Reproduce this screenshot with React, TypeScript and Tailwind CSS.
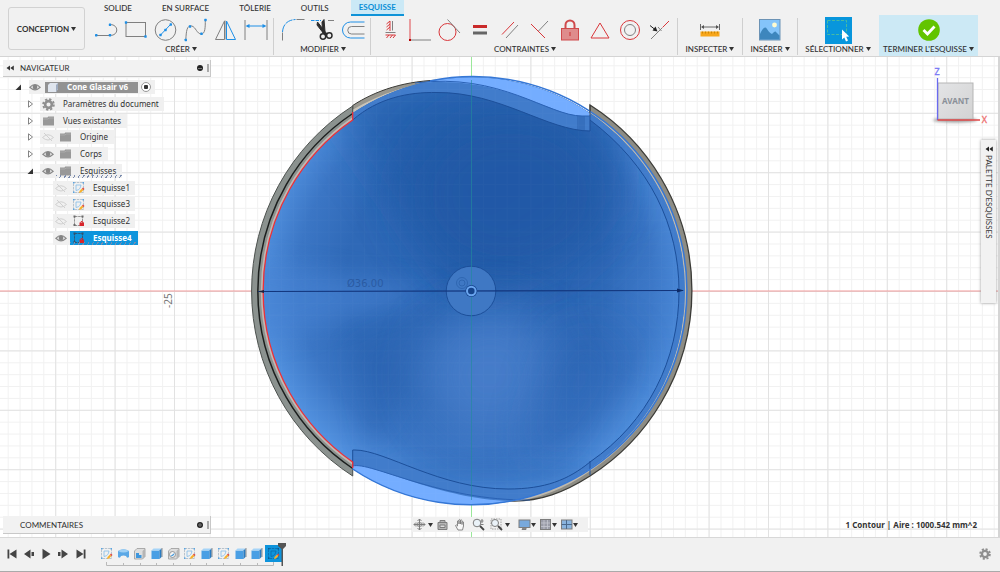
import React from "react";

type IconFn = () => React.ReactElement;

const BLUE = "#1e8fe6";
const RED = "#d9363a";
const GREY = "#808080";

function Caret() {
  return (
    <svg viewBox="0 0 5 4" className="h-1 w-[5px] shrink-0" aria-hidden="true">
      <path d="M0 0h5L2.5 4z" fill="#333" />
    </svg>
  );
}

function Icon24({ children }: { children: React.ReactNode }) {
  return (
    <svg viewBox="0 0 24 24" className="size-6" fill="none" strokeWidth="1" aria-hidden="true">
      {children}
    </svg>
  );
}

function Dot({ x, y }: { x: number; y: number }) {
  return <rect x={x - 1.2} y={y - 1.2} width="2.4" height="2.4" rx="0.4" fill={BLUE} />;
}

const LineIcon: IconFn = () => (
  <Icon24>
    <path d="M2 17.5h13M16 6.5c9 0 9 11 0 11" stroke={GREY} />
    <Dot x={2.2} y={17.3} />
    <Dot x={16} y={17.3} />
    <Dot x={16} y={6.8} />
  </Icon24>
);
const RectIcon: IconFn = () => (
  <Icon24>
    <rect x="2" y="4.5" width="19.5" height="14" stroke={GREY} />
    <Dot x={2} y={4.5} />
    <Dot x={21.5} y={18.5} />
  </Icon24>
);
const CircleIcon: IconFn = () => (
  <Icon24>
    <circle cx="11.5" cy="12" r="10.3" stroke={GREY} />
    <path d="M6.5 17l10-10.500" stroke={BLUE} />
    <Dot x={6.5} y={17} />
    <Dot x={11.5} y={12} />
    <Dot x={16.8} y={6.5} />
  </Icon24>
);
const SplineIcon: IconFn = () => (
  <Icon24>
    <path d="M1.800 22c.5-9 1-15 6-14 4 1 5 8 9.500 8 4 0 4-7 4-14" stroke={GREY} />
    <Dot x={1.8} y={22} />
    <Dot x={6} y={8.5} />
    <Dot x={17.5} y={15.7} />
    <Dot x={21.5} y={2} />
  </Icon24>
);
const MirrorIcon: IconFn = () => (
  <Icon24>
    <path d="M11 2.500v19M10.500 3L1.500 21.500h9z" stroke={GREY} />
    <path d="M12.500 3l9 18.500h-9z" stroke={BLUE} />
  </Icon24>
);
const DimensionIcon: IconFn = () => (
  <Icon24>
    <path d="M1 2v20M23 2v20" stroke={GREY} />
    <path d="M3 8h18" stroke={BLUE} />
    <path d="M1.500 8l4-2v4zM22.500 8l-4-2v4z" fill={BLUE} />
  </Icon24>
);
const FilletIcon: IconFn = () => (
  <Icon24>
    <path d="M1.500 22.500v-8M15.500 1.500h8" stroke={GREY} />
    <path d="M1.500 14C2 7 6 2 14.500 1.500" stroke={BLUE} strokeDasharray="8 1" />
  </Icon24>
);
const TrimIcon: IconFn = () => (
  <Icon24>
    <path d="M0 2.500h10" stroke={BLUE} strokeDasharray="3.500 1" />
    <path d="M17 2.500h6" stroke={GREY} />
    <path d="M6.500 4l9.500 12-2.200 1L6 7zM13 1.500l1 12-2.400 1L11 4z" fill="#2c2c2c" stroke="#2c2c2c" />
    <circle cx="12" cy="18.500" r="2.700" stroke="#2c2c2c" strokeWidth="1.500" />
    <circle cx="18.300" cy="17.500" r="2.700" stroke="#2c2c2c" strokeWidth="1.500" />
  </Icon24>
);
const OffsetIcon: IconFn = () => (
  <Icon24>
    <path d="M23.500 4H9.500a8 8 0 0 0 0 16h14" stroke={BLUE} />
    <path d="M23.500 8.500H10.500a3.700 3.700 0 0 0 0 7.500h13" stroke={GREY} />
  </Icon24>
);

const FixIcon: IconFn = () => (
  <Icon24>
    <path d="M14.500 3v9.500M7.500 14.500h10" stroke={GREY} />
    <path d="M12 3v10M8.500 6l3.500-3M8.500 9l3.500-3M8.500 12l3.500-3M7.500 17h10M8.500 20l2.500-3M12 20l2.500-3M15 20l2.500-3" stroke={RED} />
  </Icon24>
);
const CoincidentIcon: IconFn = () => (
  <Icon24>
    <path d="M2 1v20" stroke="#e58083" strokeWidth="1.500" />
    <path d="M2 22h21" stroke={GREY} />
    <rect x="1" y="21" width="2" height="2" fill="#b00" />
  </Icon24>
);
const TangentIcon: IconFn = () => (
  <Icon24>
    <circle cx="9.500" cy="14" r="8.500" stroke={RED} />
    <path d="M9.500 1.500L22 15" stroke={GREY} />
  </Icon24>
);
const EqualIcon: IconFn = () => (
  <Icon24>
    <path d="M5 8.500h14" stroke="#c92a2a" strokeWidth="3" />
    <path d="M5 15h14" stroke="#666" strokeWidth="3" />
  </Icon24>
);
const ParallelIcon: IconFn = () => (
  <Icon24>
    <path d="M4 16.500L16 4" stroke={RED} />
    <path d="M8 20L20 7" stroke={GREY} />
  </Icon24>
);
const PerpendicularIcon: IconFn = () => (
  <Icon24>
    <path d="M3 6l14 14" stroke={RED} />
    <path d="M10.500 13L20 3" stroke={GREY} />
  </Icon24>
);
const LockIcon: IconFn = () => (
  <Icon24>
    <path d="M7.500 11V7a4.500 4.500 0 0 1 9 0v4" stroke="#cf4a4c" strokeWidth="2" />
    <rect x="3.500" y="10.500" width="17" height="11.500" fill="#df8c8c" stroke="#cf4a4c" />
    <path d="M12 14v4" stroke="#c33" />
  </Icon24>
);
const TriangleIcon: IconFn = () => (
  <Icon24>
    <path d="M12 5l9 15H3z" stroke={RED} />
  </Icon24>
);
const ConcentricIcon: IconFn = () => (
  <Icon24>
    <circle cx="12" cy="12" r="9.500" stroke={RED} />
    <circle cx="12" cy="12" r="5.500" stroke={GREY} />
  </Icon24>
);
const SymmetryIcon: IconFn = () => (
  <Icon24>
    <path d="M3 21l11-11" stroke={GREY} />
    <path d="M14.500 9.500L21 3" stroke={RED} />
    <path d="M2 7.500l5 4" stroke="#222" />
    <path d="M9.500 13.500l-5-1 3-4z" fill="#222" />
    <path d="M10 9l3.500 4" stroke={GREY} />
  </Icon24>
);
const InspectIcon: IconFn = () => (
  <Icon24>
    <path d="M2.500 6v6M21.500 6v6M4 9h16" stroke="#666" />
    <path d="M3 9l3-2v4zM21 9l-3-2v4z" fill="#555" />
    <rect x="2.500" y="13.500" width="19" height="5" fill="#f7a61b" />
    <path d="M4.500 13.500v2M7.500 13.500v2M10.500 13.500v2M13.500 13.500v2M16.500 13.500v2M19.500 13.500v2" stroke="#c07d00" strokeWidth="0.800" />
  </Icon24>
);
const InsertIcon: IconFn = () => (
  <Icon24>
    <rect x="1.500" y="1.500" width="20.500" height="20.500" fill="#84c4fa" stroke="#6c93b5" />
    <path d="M2 16c3-6 5-8 7-5s3 4 5 5c2-2 3-3 4-2l3.500 3.500V21.500H2z" fill="#3d86bd" />
    <circle cx="16.500" cy="7" r="2.400" fill="#fffbd0" />
  </Icon24>
);
const SelectIcon: IconFn = () => (
  <svg viewBox="0 0 27 27" className="size-[27px]" fill="none" aria-hidden="true">
    <rect width="27" height="27" fill="#0896dc" />
    <rect x="2.500" y="3.500" width="19" height="14" stroke="#4fc09a" strokeDasharray="3 1.500" strokeWidth="0.900" />
    <path d="M17 12.500v10l2.300-2 1.700 4 2-1-1.800-3.800 3-.3z" fill="#fff" />
  </svg>
);
const FinishIcon: IconFn = () => (
  <Icon24>
    <circle cx="12" cy="12" r="10.800" fill="#62c400" />
    <path d="M6.500 12l4 4 7-7.500" stroke="#fff" strokeWidth="2.800" />
  </Icon24>
);

const tabs = ["SOLIDE", "EN SURFACE", "TÔLERIE", "OUTILS", "ESQUISSE"];

const groups: { label: string; tools: [string, IconFn][] }[] = [
  {
    label: "CRÉER",
    tools: [["Ligne", LineIcon], ["Rectangle", RectIcon], ["Cercle", CircleIcon], ["Spline", SplineIcon], ["Symétrie", MirrorIcon], ["Cote", DimensionIcon]],
  },
  { label: "MODIFIER", tools: [["Congé", FilletIcon], ["Ajuster", TrimIcon], ["Décaler", OffsetIcon]] },
  {
    label: "CONTRAINTES",
    tools: [
      ["Horizontal/Vertical", FixIcon], ["Coïncident", CoincidentIcon], ["Tangent", TangentIcon], ["Égal", EqualIcon], ["Parallèle", ParallelIcon],
      ["Perpendiculaire", PerpendicularIcon], ["Verrouiller", LockIcon], ["Milieu", TriangleIcon], ["Concentrique", ConcentricIcon], ["Symétrique", SymmetryIcon],
    ],
  },
];

function MenuLabel({ children }: { children: React.ReactNode }) {
  return (
    <button type="button" className="flex h-3 items-center gap-[2px] whitespace-nowrap">
      {children}
      <Caret />
    </button>
  );
}

function SingleTool({ label, icon: Ico, className }: { label: string; icon: IconFn; className: string }) {
  return (
    <div className={`flex shrink-0 flex-col items-center justify-between ${className}`}>
      <button type="button" aria-label={label} className="flex h-6 items-center">
        <Ico />
      </button>
      <MenuLabel>{label}</MenuLabel>
    </div>
  );
}

function Toolbar() {
  return (
    <header className="flex h-[57px] shrink-0 border-b border-[#d4d4d4] bg-[#f1f1f1] font-[Lato,sans-serif] text-[8px] font-medium text-[#303030]">
      <button type="button" className="mt-[7px] ml-2 flex h-[43px] w-[77px] shrink-0 items-center justify-center gap-[2px] rounded-[3px] border border-[#d2d2d2] font-bold">
        CONCEPTION
        <Caret />
      </button>
      <div className="ml-[9px] flex flex-1 flex-col">
        <nav className="ml-[2px] flex h-4 gap-[14px]">
          {tabs.map((t) =>
            t === "ESQUISSE" ? (
              <a key={t} href="#esquisse" className="flex items-center border-b-2 border-[#0e93d8] bg-[#cbe9f6] px-2 font-bold text-[#0a8fd6]">{t}</a>
            ) : (
              <a key={t} href="#onglet" className="flex items-center px-2">{t}</a>
            ),
          )}
        </nav>
        <div className="flex h-10">
          {groups.map((g) => (
            <div key={g.label} className="mt-[2px] mb-[1px] mr-[7px] flex shrink-0 flex-col items-center justify-between border-r border-[#cfcfcf] pr-[5px]">
              <div className="flex gap-[6px]">
                {g.tools.map(([name, Ico]) => (
                  <button key={name} type="button" aria-label={name}>
                    <Ico />
                  </button>
                ))}
              </div>
              <MenuLabel>{g.label}</MenuLabel>
            </div>
          ))}
          <SingleTool label="INSPECTER" icon={InspectIcon} className="mt-[2px] mb-[1px] -ml-[7px] w-[65px] border-r border-[#cfcfcf]" />
          <SingleTool label="INSÉRER" icon={InsertIcon} className="mt-[2px] mb-[1px] w-[55px] border-r border-[#cfcfcf]" />
          <SingleTool label="SÉLECTIONNER" icon={SelectIcon} className="mt-[2px] mb-[1px] w-[80px]" />
          <SingleTool label="TERMINER L'ESQUISSE" icon={FinishIcon} className="ml-[1px] -mt-[1px] w-[99px] bg-[#cce9f5] pt-[3px] pb-[1px]" />
        </div>
      </div>
    </header>
  );
}

function SketchCanvas() {
  const disc = "M352.700 120A208 208 0 0 0 352.700 462V469A213.800 213.800 0 1 0 352.700 113Z";
  return (
    <svg viewBox="0 57 1000 480" preserveAspectRatio="xMidYMid slice" className="absolute inset-0 h-full w-full" role="img" aria-label="Esquisse du cône">
      <defs>
        <pattern id="minor" x="471" y="291" width="11.880" height="11.880" patternUnits="userSpaceOnUse">
          <path d="M0 .5h11.880M.5 0v11.880" stroke="#f1f1f1" strokeWidth="1" />
        </pattern>
        <pattern id="major" x="471" y="291" width="59.400" height="59.400" patternUnits="userSpaceOnUse">
          <path d="M0 .5h59.400M.5 0v59.400" stroke="#e2e2e2" strokeWidth="1" />
        </pattern>
        <radialGradient id="body" gradientUnits="userSpaceOnUse" cx="475" cy="280" r="216">
          <stop offset="0" stopColor="#2f69b7" />
          <stop offset="0.600" stopColor="#2f69b7" />
          <stop offset="0.820" stopColor="#3b76c5" />
          <stop offset="1" stopColor="#5190de" />
        </radialGradient>
        <filter id="soft" x="-60%" y="-60%" width="220%" height="220%">
          <feGaussianBlur stdDeviation="24" />
        </filter>
        <filter id="soft2" x="-50%" y="-50%" width="200%" height="200%">
          <feGaussianBlur stdDeviation="12" />
        </filter>
        <clipPath id="discClip">
          <path d={disc} />
        </clipPath>
      </defs>

      <rect x="-1000" y="-1000" width="3000" height="3000" fill="#fff" />
      <rect x="-1000" y="-1000" width="3000" height="3000" fill="url(#minor)" />
      <rect x="-1000" y="-1000" width="3000" height="3000" fill="url(#major)" />
      <path d="M-1000 291H2000" stroke="#f29a9a" />
      <path d="M471.500 -500V1200" stroke="#9be89b" />

      <path d="M352.700 105.500C375 91 405 80 445 80L445 92 352.700 121Z" fill="#98978f" stroke="#3b3b37" />
      <path d="M352.700 112C375 99 405 85 445 83" fill="none" stroke="#c9c4b9" strokeWidth="4" />
      <path d="M352.700 106A219.800 219.800 0 0 0 352.700 476V462A208 208 0 0 1 352.700 120Z" fill="#8b928f" stroke="#4d524f" />
      <path d="M352.700 118.500A209.500 209.500 0 0 0 352.700 463.500" fill="none" stroke="#bfb9b4" strokeWidth="2.500" />
      <path d="M352.700 113.500A213.500 213.500 0 0 0 352.700 468.500" fill="none" stroke="#1c1f1e" strokeWidth="1.500" />
      <path d="M590 105A219.800 219.800 0 0 1 590 476C565 492 540 502 510 501L540 480 640 400 660 250 590 116Z" fill="#8d8c84" stroke="#3b3b37" strokeWidth="1.300" />
      <path d="M590 112.500A215 215 0 0 1 590 469.500C565 487 540 498 510 500" fill="none" stroke="#bdb8ae" strokeWidth="3" />

      <path d={disc} fill="url(#body)" />
      <g clipPath="url(#discClip)">
        <path d="M471 305L300 60H640L610 210Z" fill="#1f58a4" opacity="0.650" filter="url(#soft)" />
        <ellipse cx="510" cy="195" rx="105" ry="90" fill="#2159a5" opacity="0.700" filter="url(#soft)" />
        <path d="M440 291L240 260V350Z" fill="#4884d4" opacity="0.600" filter="url(#soft2)" />
        <path d="M590 300L700 260V370Z" fill="#4581d1" opacity="0.400" filter="url(#soft)" />
        <path d="M466 296L350 350 370 450Z" fill="#2b63b0" opacity="0.500" filter="url(#soft2)" />
        <ellipse cx="490" cy="375" rx="68" ry="66" fill="#4b81cd" opacity="0.800" filter="url(#soft)" />
        <path d="M570 325L630 350 560 470 530 450Z" fill="#2b64b2" opacity="0.600" filter="url(#soft)" />
        <ellipse cx="490" cy="475" rx="110" ry="14" fill="#2b65b3" opacity="0.500" filter="url(#soft2)" />
        <path
          d="M352.700 120C378 98 408 92 437 92.500C500 92 548 131 590 131V120C650 165 679 226 679 291C679 360 648 422 590 462C568 480 545 489 508 489C440 489 385 450 355 450H352.700V469L400 520H600L720 400V180L600 60H400L352.700 100Z"
          fill="#417ccb"
        />
        <path d="M577 114h8v16h-8z" fill="#2f67b4" opacity="0.600" />
        <path d="M410 84C500 72 550 116 582 116H590L600 60H410Z" fill="#74adff" />
        <path d="M352.700 466C370 461 440 501 515 501L530 515H352.700Z" fill="#74adff" />
        <rect x="240" y="60" width="460" height="460" fill="url(#minor)" opacity="0.020" />
      </g>
      <g fill="none" stroke="#1c4f9a" strokeWidth="1">
        <path d="M352.700 120C378 98 408 92 437 92.500C500 92 548 131 590 131V116" />
        <path d="M415 83C500 72 548 116 582 116H590" stroke="#2a62b5" />
        <path d="M590 120C650 165 679 226 679 291C679 360 648 422 590 462C568 480 545 489 508 489C440 489 385 450 355 450H352.700V466" />
        <path d="M352.700 466C370 461 440 501 530 500" stroke="#2a62b5" />
        <path d="M590 461V475" />
        <circle cx="471" cy="291" r="24.800" fill="#3f78c4" />
      </g>
      <path d="M430 81A213.800 213.800 0 0 1 530 496.500" fill="none" stroke="#3577d6" strokeWidth="1.500" />
      <path d="M352.700 469A213.800 213.800 0 0 0 530 496.500" fill="none" stroke="#3577d6" strokeWidth="1.500" />
      <path d="M590 105V116" stroke="#333" strokeWidth="0.700" />
      <path d="M352.700 112V120A208 208 0 0 0 352.700 462V468" fill="none" stroke="#ee3038" strokeWidth="1.300" />
      <path d="M471.500 80V500" stroke="#1f8b9b" strokeWidth="1" opacity="0.600" />
      <path d="M258 291.500L683 290.500" stroke="#12357c" strokeWidth="1.200" />
      <path d="M684 290.500l-7-2v4z" fill="#0d2a66" />
      <path d="M258 291.500l6-1.500v3z" fill="#1a2340" />
      <circle cx="462" cy="283" r="5.500" fill="none" stroke="#285ea9" strokeWidth="0.700" />
      <circle cx="462" cy="283" r="3" fill="none" stroke="#285ea9" strokeWidth="0.700" />
      <circle cx="471.300" cy="291" r="6" fill="#15448c" />
      <circle cx="471.300" cy="291" r="4.300" fill="none" stroke="#6aa5ef" strokeWidth="2" />
      <text x="347" y="287" fontSize="10" className="font-['DejaVu_Sans',sans-serif]" fill="#2a5ba3">Ø36.00</text>
      <text transform="translate(172 308) rotate(-90)" fontSize="10" fill="#777">-25</text>
    </svg>
  );
}

function Eye({ off = false }: { off?: boolean }) {
  return (
    <svg viewBox="0 0 12 10" className="h-[10px] w-3 shrink-0" fill="none" aria-hidden="true">
      {off ? (
        <g stroke="#d0d0d0">
          <path d="M.5 5.500Q6 0 11.500 5.500Q6 10.500.5 5.500z" />
          <path d="M2 1l8 8" />
        </g>
      ) : (
        <g>
          <path d="M.8 5.300Q6-.3 11.200 5.300Q6 10.300.8 5.300z" stroke="#8a8a8a" strokeWidth="1.200" />
          <circle cx="6" cy="5" r="2.400" fill="#858585" />
        </g>
      )}
    </svg>
  );
}

function Folder() {
  return (
    <svg viewBox="0 0 13 10" className="h-[10px] w-[13px] shrink-0" aria-hidden="true">
      <path d="M1 1.500h4.500l.7-1H12v9H1z" fill="#989898" />
      <path d="M1 3h5l1-1h5" stroke="#b9b9b9" strokeWidth="0.600" fill="none" />
    </svg>
  );
}

function Gear({ className }: { className: string }) {
  return (
    <svg viewBox="0 0 12 12" className={className} fill="none" stroke="#8f8f8f" aria-hidden="true">
      <circle cx="6" cy="6" r="3.100" strokeWidth="2.400" />
      <circle cx="6" cy="6" r="4.900" strokeWidth="1.800" strokeDasharray="2.100 1.750" />
    </svg>
  );
}

function SketchGlyph({ locked = false, selected = false }: { locked?: boolean; selected?: boolean }) {
  return (
    <svg viewBox="0 0 13 13" className="size-[13px] shrink-0" fill="none" aria-hidden="true">
      {locked ? (
        <g>
          <path d="M2.500 2v9.500H10M3 2.500h7.500V9" stroke={selected ? "#33506b" : "#8a8a8a"} strokeDasharray="2.500 .7" strokeWidth="0.900" />
          <path d="M1.500 1.500h2v2h-2zM9.500 1.500h2v2h-2zM1.500 10h2v2h-2z" fill={selected ? "#33506b" : "#6a6a6a"} />
          <rect x="7.500" y="8.500" width="4.500" height="3.500" fill="#d8262c" />
          <path d="M8.500 8.500q1.300-3 2.600 0" stroke="#d8262c" />
        </g>
      ) : (
        <g>
          <rect x="1.500" y="1.500" width="10" height="10" stroke={selected ? "#0c6aa8" : "#a9b8c4"} strokeDasharray="2.500 .8" strokeWidth="0.800" />
          <path d="M4 4v5.500c3.500-.5 4.500-2.500 5-5.500z" stroke={selected ? "#0c6aa8" : "#84bdea"} strokeWidth="0.800" />
          <path d="M1 1h1.500v1.500H1zM10.500 1H12v1.500h-1.500zM1 10.500h1.500V12H1z" fill={selected ? "#0a5b92" : "#5aa5e2"} />
          <path d="M7 12l.5-2L10 7.500l1.500 1.500L9 11.500z" fill="#f6b02c" />
          <path d="M10 7.500l1-1 1.500 1.500-1 1z" fill="#e0403c" />
        </g>
      )}
    </svg>
  );
}

function Twisty({ open = false }: { open?: boolean }) {
  return (
    <svg viewBox="0 0 7 8" className="h-2 w-[7px] shrink-0" aria-hidden="true">
      {open ? <path d="M6 1.500v5.500H.5z" fill="#333" /> : <path d="M1.500 .8v6.400L5.500 4z" fill="#fff" stroke="#777" strokeWidth="0.900" />}
    </svg>
  );
}

const chip = "flex h-[14px] items-center bg-[#f0f0f0]";

function Hatch({ className }: { className: string }) {
  return <span className={`absolute bottom-0 h-[3px] bg-[repeating-linear-gradient(120deg,#7b8cae_0px,#7b8cae_1px,transparent_1px,transparent_4px)] ${className}`} />;
}

function Browser() {
  return (
    <section className="absolute top-[3px] left-[3px] w-52 text-[8px] text-[#303030]">
      <div className="flex h-[17px] items-center border-r border-b border-[#c8c8c8] bg-[#f2f2f2] pr-[1px] pl-[3px]">
        <svg viewBox="0 0 8 6" className="mr-[6px] h-[6px] w-2" aria-hidden="true">
          <path d="M4 .5v5L.5 3zM7.800 .5v5L4.300 3z" fill="#333" />
        </svg>
        <h2 className="flex-1 font-[Lato,sans-serif] font-normal">NAVIGATEUR</h2>
        <button type="button" aria-label="Réduire" className="mr-1 flex size-[6px] items-center rounded-full bg-[#222] px-[1px]">
          <span className="h-px w-full bg-[#777]" />
        </button>
        <span className="h-2 w-[2px] border-x border-[#aaa]" />
      </div>
      <ul className="mt-[2px] grid h-[167px] grid-rows-10 items-center">
        <li className="flex items-center pl-3">
          <Twisty open />
          <div className={`ml-[7px] pr-1 ${chip}`}>
            <Eye />
            <span className="ml-1 flex h-[11px] w-[93px] items-center gap-2 bg-[#929292] pl-[2px] font-bold text-white">
              <svg viewBox="0 0 12 11" className="h-[11px] w-3" aria-hidden="true">
                <path d="M3 1h8v6l-2 3H1V3z" fill="#dfe5ee" />
                <path d="M9 3l2-2v6l-2 3z" fill="#9eabc0" />
              </svg>
              Cone Glasair v6
            </span>
            <input type="radio" name="composant" aria-label="Activer le composant" defaultChecked className="ml-[3px] size-[10px] appearance-none rounded-full border border-[#999] bg-[radial-gradient(circle,#333_0_2px,#fff_2.5px)]" />
          </div>
        </li>
        <li className="flex items-center gap-[6px] pl-6">
          <Twisty />
          <div className={`gap-2 pr-[5px] pl-[2px] ${chip}`}>
            <Gear className="size-[13px]" />
            Paramètres du document
          </div>
        </li>
        <li className="flex items-center gap-[6px] pl-6">
          <Twisty />
          <div className={`gap-2 pr-[6px] pl-[2px] ${chip}`}>
            <Folder />
            Vues existantes
          </div>
        </li>
        {["Origine", "Corps", "Esquisses"].map((n) => (
          <li key={n} className="flex items-center gap-[6px] pl-6">
            <Twisty open={n === "Esquisses"} />
            <div className={`relative pr-[6px] pl-[2px] ${chip}`}>
              <Eye off={n === "Origine"} />
              <span className="ml-[5px] flex items-center gap-2">
                <Folder />
                {n}
              </span>
              {n === "Esquisses" && <Hatch className="right-0 left-4" />}
            </div>
          </li>
        ))}
        {["Esquisse1", "Esquisse3", "Esquisse2"].map((n) => (
          <li key={n} className="flex items-center pl-[50px]">
            <div className={`pr-[5px] pl-[2px] ${chip}`}>
              <Eye off />
              <span className="ml-[5px] flex items-center gap-2">
                <SketchGlyph locked={n === "Esquisse2"} />
                {n}
              </span>
            </div>
          </li>
        ))}
        <li className="flex items-center pl-[50px]">
          <div className={`pl-[2px] ${chip}`}>
            <Eye />
            <span className="relative ml-[3px] flex h-[14px] items-center gap-2 bg-[#0e94dc] pr-[6px] pl-[2px] font-bold text-white">
              <SketchGlyph locked selected />
              Esquisse4
              <Hatch className="inset-x-0" />
            </span>
          </div>
        </li>
      </ul>
    </section>
  );
}

function ViewCube() {
  return (
    <svg viewBox="0 0 70 62" className="absolute top-[8px] right-[8px] h-[62px] w-[70px]" aria-label="Vue avant" role="img">
      <defs>
        <linearGradient id="cube" x1="0" y1="0" x2="1" y2="1">
          <stop offset="0" stopColor="#e3e4e6" />
          <stop offset="1" stopColor="#d3d3d3" />
        </linearGradient>
        <filter id="cubeShadow" x="-30%" y="-200%" width="160%" height="500%">
          <feGaussianBlur stdDeviation="1.500" />
        </filter>
      </defs>
      <ellipse cx="33" cy="55" rx="22" ry="2.500" fill="#999" filter="url(#cubeShadow)" />
      <rect x="16" y="18" width="35" height="36" fill="url(#cube)" stroke="#b5b5b5" />
      <path d="M15.500 13v42" stroke="#6a6af0" strokeWidth="1.300" />
      <path d="M15.500 55H58" stroke="#e04848" strokeWidth="1.300" />
      <text x="33.500" y="39" fontSize="8" fontWeight="700" fill="#8a9098" textAnchor="middle">AVANT</text>
      <text x="15" y="10" fontSize="9" fill="#7878f5" stroke="#7878f5" strokeWidth="0.300" textAnchor="middle">Z</text>
      <text x="62.500" y="58" fontSize="9" fill="#ee6e6e" stroke="#ee6e6e" strokeWidth="0.300" textAnchor="middle">X</text>
    </svg>
  );
}

function Palette() {
  return (
    <aside className="absolute top-[83px] right-1 flex h-[163px] w-[15px] flex-col items-center gap-[3px] bg-[#f2f2f2] pt-[6px] font-[Lato,sans-serif] text-[8px] text-[#333] shadow-[0_0_3px_#999]">
      <svg viewBox="0 0 8 6" className="h-[6px] w-2 shrink-0" aria-hidden="true">
        <path d="M4 .5v5L.5 3zM7.800 .5v5L4.300 3z" fill="#222" />
      </svg>
      <h2 className="font-normal whitespace-nowrap [writing-mode:vertical-rl]">PALETTE D'ESQUISSES</h2>
    </aside>
  );
}

function NavIcon({ children }: { children: React.ReactNode }) {
  return (
    <svg viewBox="0 0 13 13" className="size-[13px]" fill="none" stroke="#7d7d7d" aria-hidden="true">
      {children}
    </svg>
  );
}

function NavBar() {
  return (
    <div className="absolute bottom-[5px] left-1/2 flex h-[15px] w-[176px] -translate-x-[88px] items-center bg-[#f1f1f1] pl-[1px]">
      <button type="button" aria-label="Orbite" className="flex items-center gap-[2px]">
        <NavIcon>
          <path d="M6.500 1v11M1 6.500h11M4.500 3l2-2 2 2M4.500 10l2 2 2-2M3 4.500l-2 2 2 2M10 4.500l2 2-2 2" />
          <ellipse cx="6.500" cy="6.500" rx="3" ry="1.800" />
        </NavIcon>
        <Caret />
      </button>
      <button type="button" aria-label="Regarder" className="ml-[3px]">
        <NavIcon>
          <path d="M2 4.500h9v7H2zM4 4.500v-2h5v2" fill="#b5b5b5" />
          <path d="M4 7h5v2.500H4z" fill="#ddd" />
        </NavIcon>
      </button>
      <button type="button" aria-label="Panoramique" className="ml-[5px]">
        <NavIcon>
          <path d="M4 12L1.500 7.500q.5-1.500 2 .5V3q.8-1.200 1.500 0V6 2q.8-1.200 1.500 0v4-3.500q.8-1.200 1.500 0V6.500 4q.8-1 1.500 0v4l-1 4z" fill="#f8f8f8" strokeWidth="0.900" />
        </NavIcon>
      </button>
      <button type="button" aria-label="Zoom" className="ml-[5px]">
        <NavIcon>
          <circle cx="5" cy="5" r="3.800" fill="#eaf2f8" />
          <path d="M8 8l4 4" stroke="#444" strokeWidth="1.800" />
          <path d="M10 1v4M8.500 3h3M8.500 6.500h3" />
        </NavIcon>
      </button>
      <button type="button" aria-label="Zoom fenêtre" className="ml-[5px] flex items-center gap-[2px]">
        <NavIcon>
          <rect x="1" y="1" width="10" height="10" strokeDasharray="1.500 1" strokeWidth="0.700" />
          <circle cx="5" cy="5" r="3.500" fill="#eaf2f8" />
          <path d="M8 8l4 4" stroke="#444" strokeWidth="1.800" />
        </NavIcon>
        <Caret />
      </button>
      <button type="button" aria-label="Affichage" className="ml-[8px] flex items-center">
        <NavIcon>
          <rect x="1" y="2" width="11" height="7.500" fill="#78a9dc" />
          <path d="M5 10h3v1.500H4z" fill="#999" />
        </NavIcon>
        <Caret />
      </button>
      <button type="button" aria-label="Grille" className="ml-[3px] flex items-center">
        <NavIcon>
          <rect x="1.500" y="1.500" width="10" height="10" fill="#9a9ca8" />
          <path d="M5 2v9M8.500 2v9M2 5h9M2 8.500h9" stroke="#c5c6d0" strokeWidth="0.800" />
        </NavIcon>
        <Caret />
      </button>
      <button type="button" aria-label="Fenêtres" className="ml-[3px] flex items-center">
        <NavIcon>
          <rect x="1.500" y="2" width="10.500" height="9" fill="#8ab4de" />
          <path d="M6.500 2v9M1.500 6.500H12" stroke="#4b6a8d" />
        </NavIcon>
        <Caret />
      </button>
    </div>
  );
}

function Comments() {
  return (
    <section className="absolute bottom-[3px] left-[3px] flex h-[18px] w-52 items-center border-r border-b border-[#c8c8c8] bg-[#f2f2f2] pr-[1px] pl-[17px] font-[Lato,sans-serif] text-[8px] text-[#303030]">
      <h2 className="flex-1 font-normal">COMMENTAIRES</h2>
      <button type="button" aria-label="Ajouter" className="mr-1 flex size-[6px] items-center justify-center rounded-full bg-[#222]">
        <svg viewBox="0 0 6 6" className="size-[6px]" stroke="#777" aria-hidden="true">
          <path d="M3 1v4M1 3h4" />
        </svg>
      </button>
      <span className="h-2 w-[2px] border-x border-[#aaa]" />
    </section>
  );
}

const playback: [string, string][] = [
  ["Début", "M1.500 1.500h1.800v9H1.500zM10.500 1.500v9L3.500 6z"],
  ["Précédent", "M7.500 1.500v9L1 6zM8.500 4h2.500v4H8.500z"],
  ["Lire", "M2.500 .8v10.400L10.500 6z"],
  ["Suivant", "M4.500 1.500v9L11 6zM1 4h2.500v4H1z"],
  ["Fin", "M2.500 1.500v9L9.500 6zM9.700 1.500h1.800v9H9.700z"],
];

type Feature = "sketch" | "revolve" | "shell" | "extrude" | "hole" | "current";
const features: Feature[] = ["sketch", "revolve", "shell", "extrude", "hole", "sketch", "extrude", "sketch", "extrude", "extrude", "current"];

function FeatureIcon({ kind }: { kind: Feature }) {
  if (kind === "sketch") return <SketchGlyph />;
  if (kind === "current") return <SketchGlyph selected />;
  return (
    <svg viewBox="0 0 13 13" className="size-[13px]" fill="none" aria-hidden="true">
      {kind === "revolve" && (
        <g>
          <path d="M1 4q5.500-3.500 11 0v6q-2 2-3-1-2.500-1-5 0-1 3-3 1z" fill="#5ba8e6" />
          <path d="M1 4q5.500-3.500 11 0-5.500 3-11 0z" fill="#9fd0f5" />
        </g>
      )}
      {kind === "extrude" && (
        <g>
          <path d="M1.500 3.500h8v8.500h-8z" fill="#4a9fe4" />
          <path d="M1.500 3.500l2-2h8l-2 2z" fill="#a5d4f8" />
          <path d="M9.500 3.500l2-2V10l-2 2z" fill="#2a7cc2" />
          <path d="M12 1v9" stroke="#666" strokeWidth="0.700" />
        </g>
      )}
      {(kind === "shell" || kind === "hole") && (
        <g>
          <path d="M1.500 4l2.500-2.500h8V9.500L9.500 12h-8z" fill="#dedede" stroke="#9b9b9b" strokeWidth="0.800" />
          <path d="M9.500 4v8l2.500-2.500v-8z" fill="#b5b5b5" />
          {kind === "shell" ? (
            <path d="M3 6h3v2h2.500v3H3z" fill="#3f97dd" />
          ) : (
            <g>
              <circle cx="5.500" cy="7.500" r="3" fill="#f3f3f3" stroke="#777" strokeWidth="0.700" />
              <path d="M3.500 9l4-3a3 3 0 0 1-4 3z" fill="#3f97dd" />
            </g>
          )}
        </g>
      )}
    </svg>
  );
}

function Timeline() {
  return (
    <footer className="flex h-[35px] shrink-0 items-start border-t border-b border-t-[#d8d8d8] border-b-[#aaa] bg-[#f1f1f1] pr-[9px] pl-[6px]">
      <div className="mt-[10px] flex gap-[5px]">
        {playback.map(([name, d]) => (
          <button key={name} type="button" aria-label={name}>
            <svg viewBox="0 0 12 12" className="size-3" fill="#444" aria-hidden="true">
              <path d={d} />
            </svg>
          </button>
        ))}
      </div>
      <div className="relative mt-[7px] ml-3">
        <ol className="grid h-[17px] w-[184px] grid-cols-11">
          {features.map((f, i) => (
            <li key={i} className={f === "current" ? "flex items-center justify-center bg-[#0e94dc]" : "flex items-center justify-center"}>
              <FeatureIcon kind={f} />
            </li>
          ))}
        </ol>
        <svg viewBox="0 0 184 5" className="block h-[5px] w-[184px]" fill="none" stroke="#b9b9b9" aria-hidden="true">
          <path d="M8.500 0v3.500H175.500V0M25.500 1v2M42.500 1v2M58.500 1v2M75.500 1v2M92.500 1v2M108.500 1v2M125.500 1v2M142.500 1v2M159.500 1v2" />
        </svg>
        <svg viewBox="0 0 10 23" className="absolute -top-[2px] -right-[5px] h-[23px] w-[10px]" aria-hidden="true">
          <path d="M1 0h8v3L6 6v17H4.500V6L1 3z" fill="#555" />
        </svg>
      </div>
      <button type="button" aria-label="Paramètres" className="mt-[10px] ml-auto">
        <Gear className="size-3" />
      </button>
    </footer>
  );
}

export default function App() {
  return (
    <div className="flex h-screen min-h-[400px] flex-col overflow-hidden font-['Noto_Sans',sans-serif] leading-none">
      <Toolbar />
      <main className="relative flex-1 overflow-hidden">
        <SketchCanvas />
        <Browser />
        <ViewCube />
        <Palette />
        <NavBar />
        <Comments />
        <p className="absolute right-[23px] bottom-[8px] text-[8px] font-bold text-[#333]">1 Contour | Aire : 1000.542 mm^2</p>
        <div className="pointer-events-none absolute inset-y-0 right-0 w-[2px] bg-[#d5d5d5]" />
      </main>
      <Timeline />
    </div>
  );
}
